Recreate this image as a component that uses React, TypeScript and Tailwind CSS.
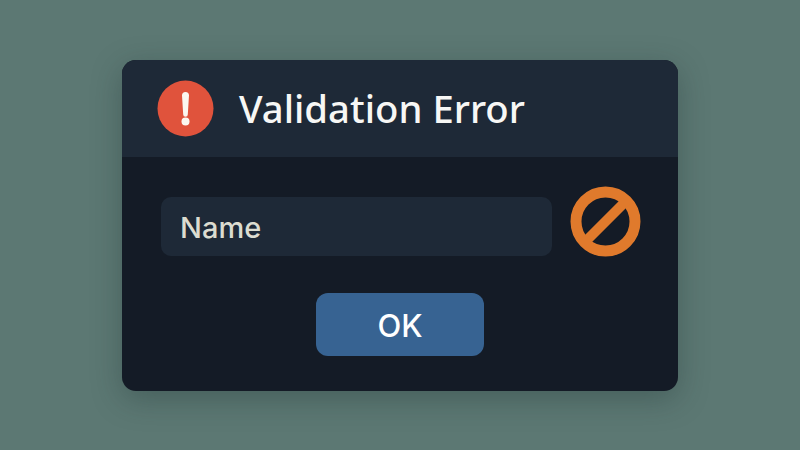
export default function App() {
  return (
    <div className="w-[800px] h-[450px] bg-[#5c7873] flex items-center justify-center font-['Noto_Sans',sans-serif] overflow-hidden">
      <div className="w-[556px] h-[331px] mt-[1px] rounded-[14px] bg-[#141b26] overflow-hidden shadow-[0_8px_30px_rgba(30,50,50,0.35)] flex flex-col">
        {/* Title bar */}
        <div className="h-[97px] bg-[#1e2937] flex items-center pl-[35px] pr-6 gap-[25px]">
          <svg width="57" height="57" viewBox="0 0 57 57" className="shrink-0">
            <circle cx="28.5" cy="28.5" r="28" fill="#e0533c" />
            <path d="M25 15.5a3.5 3.5 0 0 1 7 0l-1.2 19a2.3 2.3 0 0 1-4.6 0z" fill="#fbf7f0" />
            <circle cx="28.5" cy="41.5" r="4" fill="#fbf7f0" />
          </svg>
          <span className="text-[38.3px] font-medium leading-none text-[#f7f7f5]">Validation Error</span>
        </div>

        <div className="flex-1 flex flex-col items-center pt-[29px]">
          <div className="w-full flex items-start pl-[39px] gap-[18px]">
            <div className="mt-[11px] w-[391px] h-[59px] rounded-[10px] bg-[#1e2937] flex items-center px-[19px]">
              <span className="pt-[2px] font-['Inter',sans-serif] font-medium text-[29px] leading-none text-[#dcdcd0]">Name</span>
            </div>
            <svg width="71" height="71" viewBox="0 0 71 71" className="shrink-0">
              <circle cx="35.5" cy="35.5" r="29.5" fill="none" stroke="#e07a2c" strokeWidth="11" />
              <line x1="15" y1="56" x2="56" y2="15" stroke="#e07a2c" strokeWidth="10" />
            </svg>
          </div>
          <button className="mt-[36px] w-[168px] h-[63px] pt-[2px] rounded-[12px] bg-[#376392] text-white font-['Inter',sans-serif] text-[31px] font-medium leading-none flex items-center justify-center">
            OK
          </button>
        </div>
      </div>
    </div>
  );
}
